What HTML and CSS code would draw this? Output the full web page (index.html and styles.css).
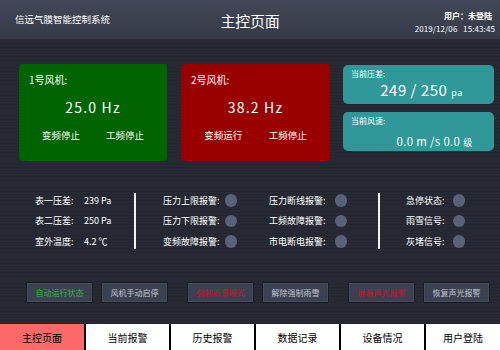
FILE: index.html
```html
<!DOCTYPE html>
<html lang="zh">
<head>
<meta charset="utf-8">
<title>主控页面</title>
<link rel="stylesheet" href="styles.css">
</head>
<body>
<div class="screen">
  <header class="topbar">
    <div class="brand">信远气膜智能控制系统</div>
    <div class="page-title">主控页面</div>
    <div class="user-info">
      <div class="user">用户：未登陆</div>
      <div class="time">2019/12/06&nbsp;&nbsp;&nbsp;15:43:45</div>
    </div>
  </header>

  <main class="main">
    <section class="cards">
      <div class="fan fan-green">
        <div class="fan-title">1号风机:</div>
        <div class="fan-value">25.0 Hz</div>
        <div class="fan-states"><span>变频停止</span><span>工频停止</span></div>
      </div>
      <div class="fan fan-red">
        <div class="fan-title">2号风机:</div>
        <div class="fan-value">38.2 Hz</div>
        <div class="fan-states"><span>变频运行</span><span>工频停止</span></div>
      </div>
      <div class="metrics">
        <div class="metric">
          <div class="metric-title">当前压差:</div>
          <div class="metric-value big">249 / 250 <small>pa</small></div>
        </div>
        <div class="metric">
          <div class="metric-title">当前风速:</div>
          <div class="metric-value wind">0.0 m /s 0.0 <small>级</small></div>
        </div>
      </div>
    </section>

    <section class="status">
      <div class="grp grp-values">
        <div class="row"><span class="lbl">表一压差:</span><span class="val">239 Pa</span></div>
        <div class="row"><span class="lbl">表二压差:</span><span class="val">250 Pa</span></div>
        <div class="row"><span class="lbl">室外温度:</span><span class="val">4.2 ℃</span></div>
      </div>
      <div class="divider"></div>
      <div class="grp grp-a">
        <div class="row"><span class="lbl">压力上限报警:</span><i class="led"></i></div>
        <div class="row"><span class="lbl">压力下限报警:</span><i class="led"></i></div>
        <div class="row"><span class="lbl">变频故障报警:</span><i class="led"></i></div>
      </div>
      <div class="grp grp-b">
        <div class="row"><span class="lbl">压力断线报警:</span><i class="led"></i></div>
        <div class="row"><span class="lbl">工频故障报警:</span><i class="led"></i></div>
        <div class="row"><span class="lbl">市电断电报警:</span><i class="led"></i></div>
      </div>
      <div class="divider divider-2"></div>
      <div class="grp grp-c">
        <div class="row"><span class="lbl">急停状态:</span><i class="led"></i></div>
        <div class="row"><span class="lbl">雨雪信号:</span><i class="led"></i></div>
        <div class="row"><span class="lbl">灰堵信号:</span><i class="led"></i></div>
      </div>
    </section>

    <section class="actions">
      <div class="btn-pair">
        <button class="btn btn-green">自动运行状态</button>
        <button class="btn">风机手动启停</button>
      </div>
      <div class="btn-pair">
        <button class="btn btn-red">强制雨雪模式</button>
        <button class="btn">解除强制雨雪</button>
      </div>
      <div class="btn-pair">
        <button class="btn btn-red">屏蔽声光报警</button>
        <button class="btn">恢复声光报警</button>
      </div>
    </section>
  </main>

  <nav class="tabs">
    <div class="tab active">主控页面</div>
    <div class="tab">当前报警</div>
    <div class="tab">历史报警</div>
    <div class="tab">数据记录</div>
    <div class="tab">设备情况</div>
    <div class="tab last">用户登陆</div>
  </nav>
</div>
</body>
</html>
```

FILE: styles.css
```css
* { box-sizing: border-box; }
html, body { margin: 0; padding: 0; }
body {
  width: 500px;
  height: 350px;
  overflow: hidden;
  font-family: "Noto Sans CJK SC", "Liberation Sans", sans-serif;
  background: #262934;
}
.screen {
  width: 500px;
  height: 350px;
  display: flex;
  flex-direction: column;
}

/* header */
.topbar {
  height: 39px;
  flex: none;
  display: grid;
  grid-template-columns: 1fr auto 1fr;
  align-items: center;
  background: linear-gradient(to bottom, #434858 0%, #3a3f4e 60%, #363a48 100%);
  color: #fff;
}
.brand {
  padding-left: 15px;
  font-size: 9.5px;
  line-height: 1;
  margin-top: 1px;
}
.page-title {
  font-size: 15px;
  line-height: 1;
  margin-top: 1px;
  letter-spacing: -0.3px;
}
.user-info {
  justify-self: end;
  padding-right: 5px;
  margin-top: 5px;
  text-align: right;
  font-size: 8px;
  line-height: 1;
}
.user { font-weight: bold; margin-bottom: 5px; padding-right: 3px; }
.time { letter-spacing: 0.1px; }

/* main area */
.main {
  flex: 1;
  display: flex;
  flex-direction: column;
  padding-left: 19px;
  background: repeating-linear-gradient(to bottom, #272a35 0px, #272a35 2px, #23262f 2px, #23262f 3px);
}

.cards {
  margin-top: 25px;
  height: 97px;
  display: flex;
}
.fan {
  border-radius: 4px;
  color: #fff;
  display: flex;
  flex-direction: column;
  padding: 10px 0 0 10px;
}
.fan-green { width: 148px; background: #006400; }
.fan-red { width: 149px; background: #990000; margin-left: 14px; }
.fan-title { font-size: 10px; line-height: 12px; }
.fan-value {
  margin-top: 13px;
  text-align: center;
  font-size: 14px;
  line-height: 16px;
  letter-spacing: 1.2px;
  padding-right: 10px;
}
.fan-states {
  margin-top: 14px;
  display: flex;
  justify-content: space-around;
  font-size: 9.5px;
  line-height: 12px;
  padding-right: 10px;
}

.metrics {
  margin-left: 13px;
  width: 151px;
  display: flex;
  flex-direction: column;
  gap: 8px;
  padding-top: 1px;
}
.metric {
  height: 39px;
  border-radius: 5px;
  background: #309898;
  color: #fff;
  padding: 3px 0 0 8px;
}
.metric-title { font-size: 8px; line-height: 11px; }
.metric-value {
  text-align: center;
  line-height: 18px;
  white-space: nowrap;
}
.metric-value.big { font-size: 15px; letter-spacing: 0.5px; padding-right: 2px; margin-top: 2px; }
.metric-value.wind { font-size: 11.5px; padding-left: 24px; margin-top: 6px; letter-spacing: 0.3px; }
.metric-value small { font-size: 9px; }

/* status grid */
.status {
  margin-top: 29px;
  display: flex;
  color: #fff;
  font-size: 9px;
}
.grp { display: flex; flex-direction: column; }
.row {
  height: 20.5px;
  display: flex;
  align-items: center;
  white-space: nowrap;
}
.grp-values { width: 115px; padding-left: 16px; }
.grp-values .lbl { width: 49px; }
.grp-a { width: 101px; align-items: flex-end; }
.grp-b { width: 110px; align-items: flex-end; margin-right: 31px; }
.grp-c { width: 85px; align-items: flex-end; }
.lbl + .led { margin-left: 5px; }
.grp-b .lbl + .led { margin-left: 9px; }
.grp-c .lbl + .led { margin-left: 8px; }
.led {
  display: inline-block;
  width: 12.5px;
  height: 12.5px;
  border-radius: 50%;
  background: #5a6279;
}
.divider {
  width: 2px;
  height: 56px;
  margin-top: 3px;
  background: #f2f2f2;
}

/* buttons */
.actions {
  margin-top: 30px;
  padding-left: 7px;
  display: flex;
  gap: 19px;
}
.btn-pair { display: flex; gap: 8px; }
.btn {
  width: 67px;
  height: 21px;
  padding: 0;
  font-family: inherit;
  font-size: 8px;
  color: #c3c7d0;
  background: #3b4151;
  border: 1px solid #191c25;
  box-shadow: inset 0 0 0 1px #464c5c;
  border-radius: 1px;
}
.btn-green { color: #3fae4f; }
.btn-red { color: #c3172d; }

/* tabs */
.tabs {
  flex: none;
  height: 26px;
  display: flex;
  background: #fff;
}
.tab {
  width: 85px;
  display: flex;
  align-items: center;
  justify-content: center;
  font-size: 10px;
  color: #000;
  border-left: 2px solid #000;
}
.tab.active {
  width: 84px;
  border-left: none;
  background: #fd6868;
}
.tab.last { flex: 1; }
```
